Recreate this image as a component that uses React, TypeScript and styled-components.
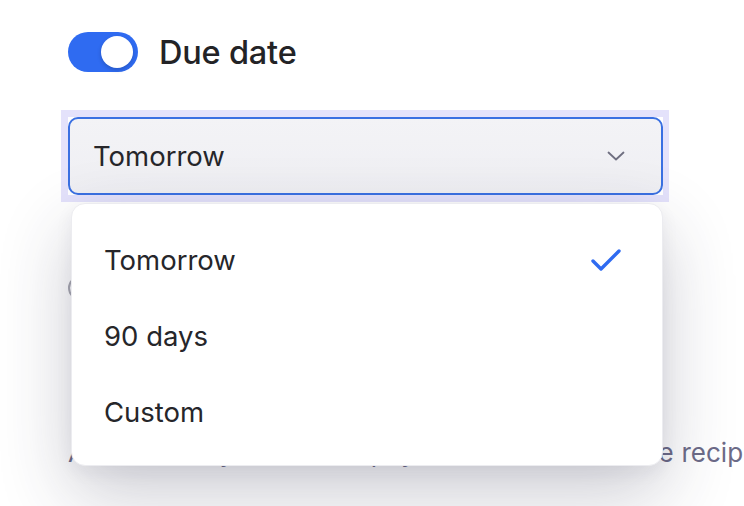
import styled, { createGlobalStyle } from "styled-components";

const GlobalStyle = createGlobalStyle`
  html, body {
    margin: 0;
    background: #ffffff;
    font-family: Inter, "Noto Sans", sans-serif;
    overflow: hidden;
  }
`;

const Page = styled.div`
  padding: 32px 0 0 68px;
  width: 744px;
  height: 506px;
  box-sizing: border-box;
`;

const Header = styled.div`
  display: flex;
  align-items: center;
  gap: 21px;
`;

const Toggle = styled.div<{ $on?: boolean }>`
  width: 70px;
  height: 40px;
  border-radius: 20px;
  background: ${(p) => (p.$on ? "#2f6bf1" : "#d5d5dc")};
  display: flex;
  align-items: center;
  justify-content: ${(p) => (p.$on ? "flex-end" : "flex-start")};
  padding: 0 5px;
  box-sizing: border-box;
`;

const Knob = styled.span`
  width: 32px;
  height: 32px;
  border-radius: 50%;
  background: #ffffff;
  box-shadow: 0 2px 4px rgba(0, 0, 0, 0.18);
`;

const Title = styled.h2`
  margin: 0;
  font-size: 32.5px;
  font-weight: 500;
  color: #232326;
  letter-spacing: -0.2px;
`;

const Field = styled.div`
  position: relative;
  margin: 38px 0 0 -7px;
  width: max-content;
`;

const Ring = styled.div`
  border: 7px solid #e4e2fb;
  border-right-width: 6px;
  background: #ffffff;
`;

const Trigger = styled.div`
  width: 595px;
  height: 78px;
  box-sizing: border-box;
  border: 2px solid #3a70e2;
  border-radius: 10px;
  background: linear-gradient(180deg, #f3f3f6 0%, #efeff3 100%);
  display: flex;
  align-items: center;
  justify-content: space-between;
  padding: 0 36px 0 23px;
  font-size: 27.5px;
  color: #26262a;
`;

const Menu = styled.ul`
  position: absolute;
  top: calc(100% + 1px);
  left: 10px;
  width: 592px;
  height: 263px;
  box-sizing: border-box;
  margin: 0;
  padding: 18px 0 17px;
  list-style: none;
  background: #ffffff;
  border: 1px solid #ececf0;
  border-radius: 14px;
  box-shadow: 0 28px 72px rgba(40, 40, 70, 0.24), 0 6px 18px rgba(40, 40, 70, 0.06);
  z-index: 2;
`;

const Option = styled.li`
  height: 76px;
  display: flex;
  align-items: center;
  justify-content: space-between;
  padding: 0 41px 0 32px;
  font-size: 27.5px;
  color: #26262a;
`;

const Below = styled.div`
  margin-top: 70px;
  display: flex;
  flex-direction: column;
  gap: 134px;
`;

const Row = styled.div`
  display: flex;
  align-items: center;
  gap: 16px;
  font-size: 26px;
  color: #6d6b88;
  white-space: nowrap;
`;

const Radio = styled.span`
  width: 24px;
  height: 24px;
  border-radius: 50%;
  border: 2px solid #a9a9b2;
  box-sizing: border-box;
`;

const Hint = styled.p`
  margin: 0;
  font-size: 26px;
  color: #6d6b88;
  white-space: nowrap;
  word-spacing: 0.5px;
`;

const Chevron = () => (
  <svg width="18" height="10" viewBox="0 0 18 10" fill="none">
    <path d="M1.5 1.5 9 8.5l7.5-7" stroke="#6f6f80" strokeWidth="1.8" strokeLinecap="round" strokeLinejoin="round" />
  </svg>
);

const Check = () => (
  <svg width="30" height="22" viewBox="0 0 30 22" fill="none">
    <path d="M2 12l8 8L28 2" stroke="#2f6bf1" strokeWidth="3.4" strokeLinecap="round" strokeLinejoin="round" />
  </svg>
);

const options = ["Tomorrow", "90 days", "Custom"];

export default function App() {
  const selected = "Tomorrow";
  return (
    <>
      <GlobalStyle />
      <Page>
        <Header>
          <Toggle $on>
            <Knob />
          </Toggle>
          <Title>Due date</Title>
        </Header>
        <Field>
          <Ring>
            <Trigger>
              <span>{selected}</span>
              <Chevron />
            </Trigger>
          </Ring>
          <Menu>
            {options.map((o) => (
              <Option key={o}>
                <span>{o}</span>
                {o === selected && <Check />}
              </Option>
            ))}
          </Menu>
        </Field>
        <Below>
          <Row>
            <Radio />
            <span>Send reminder</span>
          </Row>
          <Hint>Automatically sends the payment reminder to the recipient</Hint>
        </Below>
      </Page>
    </>
  );
}
